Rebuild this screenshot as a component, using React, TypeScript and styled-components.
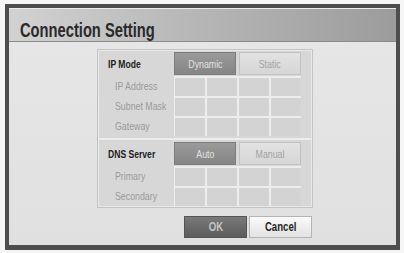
import React from 'react'
import styled, {createGlobalStyle} from 'styled-components'

const Global = createGlobalStyle`
  html, body {
    margin: 0;
    padding: 0;
    background: #f6f6f6;
  }
  body {
    font-family: "Liberation Sans", Arial, sans-serif;
  }
`

// the TV menu uses a condensed face; squeeze Liberation Sans to match
const Narrow = styled.span<{$k?: number; $origin?: string}>`
  display: inline-block;
  white-space: nowrap;
  transform: scaleX(${({$k = 0.8}) => $k});
  transform-origin: ${({$origin = 'left'}) => $origin} center;
`

const Page = styled.div`
  width: 404px;
  height: 253px;
  padding: 4px 4px 3px 5px;
  box-sizing: border-box;
`

const Frame = styled.div`
  height: 100%;
  box-sizing: border-box;
  border: 4px solid #4e4e4e;
  border-bottom-width: 5px;
  background: #e3e3e3;
  display: flex;
  flex-direction: column;
  box-shadow: inset 0 0 0 1px #f2f2f2;
`

const Header = styled.div`
  height: 34px;
  flex: none;
  box-sizing: border-box;
  background: linear-gradient(90deg, #d2d2d2 0%, #b8b8b8 45%, #9c9c9c 100%);
  border-bottom: 1px solid #8a8a8a;
  border-top: 1px solid #ececec;
  display: flex;
  align-items: center;
  padding: 8px 0 0 11px;
`

const Title = styled.h1`
  margin: 0;
  font-size: 21px;
  font-weight: 700;
  color: #2a2a2a;
  line-height: 1;
`

const Body = styled.div`
  flex: 1;
  display: flex;
  flex-direction: column;
  align-items: flex-start;
  padding: 7px 0 0 88px;
  background: linear-gradient(180deg, #e6e6e6 0%, #e0e0e0 100%);
`

const Panel = styled.div`
  width: 214px;
  background: #d7d7d7;
  border: 1px solid #c4c4c4;
  box-shadow: inset 0 0 0 1px #e8e8e8;
  display: flex;
  flex-direction: column;
`

const Section = styled.div<{$first?: boolean}>`
  padding: 2px 10px 1px 0;
  border-top: ${({$first}) => ($first ? 'none' : '2px solid #ececec')};
  margin-top: ${({$first}) => ($first ? '0' : '1px')};
`

const Row = styled.div<{$tall?: boolean}>`
  display: flex;
  align-items: stretch;
  height: ${({$tall}) => ($tall ? '24px' : '20px')};
`

const Label = styled.div<{$main?: boolean}>`
  width: 76px;
  flex: none;
  display: flex;
  align-items: center;
  box-sizing: border-box;
  padding-left: ${({$main}) => ($main ? '10px' : '17px')};
  font-size: 11px;
  font-weight: ${({$main}) => ($main ? 700 : 400)};
  color: ${({$main}) => ($main ? '#222' : '#9a9a9a')};
`

const Options = styled.div`
  display: flex;
  gap: 3px;
  padding: 0 0 1px 0;
`

const Option = styled.div<{$on?: boolean}>`
  width: 62px;
  display: flex;
  align-items: center;
  justify-content: center;
  font-size: 11px;
  color: ${({$on}) => ($on ? '#e2e2e2' : '#a2a2a2')};
  background: ${({$on}) =>
    $on ? 'linear-gradient(180deg, #9a9a9a 0%, #858585 100%)' : 'linear-gradient(180deg, #e2e2e2 0%, #d6d6d6 100%)'};
  border: 1px solid ${({$on}) => ($on ? '#7c7c7c' : '#c2c2c2')};
  box-sizing: border-box;
`

const Cells = styled.div`
  display: grid;
  grid-template-columns: repeat(4, 30px);
  gap: 2px;
  padding-top: 2px;
  background: #ededed;
  padding-left: 1px;
`

const Cell = styled.div`
  background: #d3d3d3;
`

const Actions = styled.div`
  display: flex;
  gap: 2px;
  margin: 8px 0 0 87px;
`

const ActionButton = styled.div<{$primary?: boolean}>`
  width: 63px;
  height: 22px;
  box-sizing: border-box;
  display: flex;
  align-items: center;
  justify-content: center;
  font-size: 12px;
  font-weight: 700;
  color: ${({$primary}) => ($primary ? '#c4c4c4' : '#262626')};
  background: ${({$primary}) =>
    $primary ? 'linear-gradient(180deg, #7a7a7a 0%, #5c5c5c 100%)' : 'linear-gradient(180deg, #fafafa 0%, #e2e2e2 100%)'};
  border: 1px solid ${({$primary}) => ($primary ? '#555' : '#b4b4b4')};
`

const GridRow = ({label}: {label: string}) => (
  <Row>
    <Label>
      <Narrow $k={0.8}>{label}</Narrow>
    </Label>
    <Cells>
      {[0, 1, 2, 3].map((i) => (
        <Cell key={i} />
      ))}
    </Cells>
  </Row>
)

const ModeRow = ({label, on, off}: {label: string; on: string; off: string}) => (
  <Row $tall>
    <Label $main>
      <Narrow $k={0.78}>{label}</Narrow>
    </Label>
    <Options>
      <Option $on>
        <Narrow $k={0.8} $origin="center">{on}</Narrow>
      </Option>
      <Option>
        <Narrow $k={0.8} $origin="center">{off}</Narrow>
      </Option>
    </Options>
  </Row>
)

export default function App() {
  return (
    <Page>
      <Global />
      <Frame>
        <Header>
          <Title>
            <Narrow $k={0.7}>Connection Setting</Narrow>
          </Title>
        </Header>
        <Body>
          <Panel>
            <Section $first>
              <ModeRow label="IP Mode" on="Dynamic" off="Static" />
              <GridRow label="IP Address" />
              <GridRow label="Subnet Mask" />
              <GridRow label="Gateway" />
            </Section>
            <Section>
              <ModeRow label="DNS Server" on="Auto" off="Manual" />
              <GridRow label="Primary" />
              <GridRow label="Secondary" />
            </Section>
          </Panel>
          <Actions>
            <ActionButton $primary>
              <Narrow $k={0.8} $origin="center">OK</Narrow>
            </ActionButton>
            <ActionButton>
              <Narrow $k={0.8} $origin="center">Cancel</Narrow>
            </ActionButton>
          </Actions>
        </Body>
      </Frame>
    </Page>
  )
}
